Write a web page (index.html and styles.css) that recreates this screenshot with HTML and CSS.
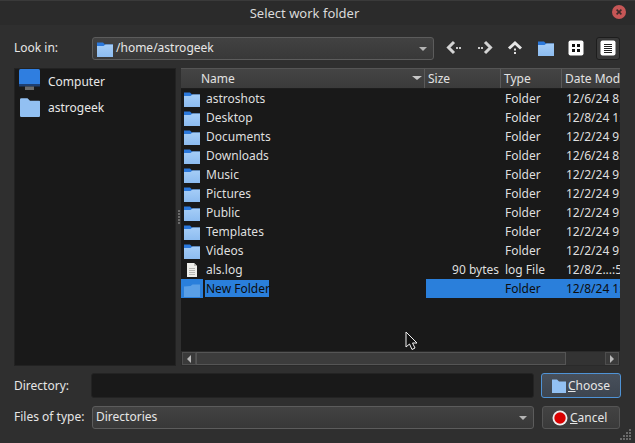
FILE: index.html
```html
<!DOCTYPE html>
<html lang="en">
<head>
<meta charset="utf-8">
<title>Select work folder</title>
<link rel="stylesheet" href="styles.css">
</head>
<body>
<svg class="defs" width="0" height="0">
  <defs>
    <linearGradient id="fb" x1="0" y1="0" x2="0" y2="1"><stop offset="0" stop-color="#a5cdf7"/><stop offset="1" stop-color="#8dbcf0"/></linearGradient>
    <symbol id="folder" viewBox="0 0 16 16">
      <path d="M0 1.500h6l2 2h8v3H0z" fill="#2a78dc"/>
      <path d="M0 5l6.500 0 2-1.600H16V16H0z" fill="url(#fb)"/>
    </symbol>
    <symbol id="folder-sel" viewBox="0 0 16 16">
      <path d="M0 5.500l6.500-.5 2-1.600H16V16H0z" fill="#5a9fe6"/>
    </symbol>
  </defs>
</svg>
<div class="window">
  <header class="titlebar">
    <span class="title">Select work folder</span>
    <span class="close"><svg width="14" height="14" viewBox="0 0 14 14"><circle cx="7" cy="7" r="7" fill="#c65656"/><path d="M4.600 4.600l4.800 4.800M9.400 4.600l-4.800 4.800" stroke="#3b2a2a" stroke-width="1.600"/></svg></span>
  </header>
  <main class="content">
    <div class="toolbar">
      <label class="label lookin">Look in:</label>
      <div class="combo path">
        <svg class="combo-icon" width="16" height="16"><use href="#folder"/></svg>
        <span class="combo-text">/home/astrogeek</span>
        <span class="arrow"></span>
      </div>
      <div class="tools">
        <button class="tool" type="button"><svg width="16" height="16" viewBox="0 0 16 16"><path d="M8 2L2.500 7.500 8 13" fill="none" stroke="#d4d4d4" stroke-width="3"/><path d="M10 7h2v2h-2zM13 7h2v2h-2z" fill="#c8c8c8"/></svg></button>
        <button class="tool" type="button"><svg width="16" height="16" viewBox="0 0 16 16"><path d="M8 2l5.500 5.500L8 13" fill="none" stroke="#d4d4d4" stroke-width="3"/><path d="M1 7h2v2H1zM4 7h2v2H4z" fill="#c8c8c8"/></svg></button>
        <button class="tool" type="button"><svg width="16" height="16" viewBox="0 0 16 16"><path d="M2 8.500L8 3l6 5.500" fill="none" stroke="#e6e6e6" stroke-width="3"/><path d="M7 8.500h2v2H7zM7 12h2v2H7z" fill="#e0e0e0"/></svg></button>
        <button class="tool" type="button"><svg width="16" height="16"><use href="#folder"/></svg></button>
        <button class="tool" type="button"><svg width="16" height="16" viewBox="0 0 16 16"><rect x=".5" y=".5" width="15" height="15" rx="2" fill="#fff"/><path d="M4 4h3v3H4zM9 4h3v3H9zM4 9h3v3H4zM9 9h3v3H9z" fill="#111"/></svg></button>
        <button class="tool active" type="button"><svg width="16" height="16" viewBox="0 0 16 16"><rect x=".5" y=".5" width="15" height="15" rx="2" fill="#fff"/><path d="M4 4h8v1H4zM4 6h8v1H4zM4 8h8v1H4zM4 10h8v1H4zM4 12h8v1H4z" fill="#222"/></svg></button>
      </div>
    </div>
    <div class="panes">
      <aside class="sidebar">
        <div class="place">
          <svg width="22" height="24" viewBox="0 0 22 24"><rect x="0" y="0" width="21" height="17" rx="1.500" fill="#2f7ee0"/><rect y="15" width="21" height="2.500" fill="#1f3f70"/><rect x="6" y="17.500" width="9" height="3.500" fill="#6b6b6b"/></svg>
          <span>Computer</span>
        </div>
        <div class="place">
          <svg width="20" height="20" viewBox="0 0 16 16"><path d="M1 1h5l2 2h7.500a.5.5 0 0 1 .5.500V15a1 1 0 0 1-1 1H1a1 1 0 0 1-1-1V2a1 1 0 0 1 1-1z" fill="#92c0f2"/></svg>
          <span>astrogeek</span>
        </div>
      </aside>
      <div class="splitter"><i></i><i></i><i></i><i></i><i></i></div>
      <section class="files">
        <div class="table-wrap">
          <div class="thead">
            <div class="th name">Name<span class="sort"></span></div>
            <div class="th size">Size</div>
            <div class="th type">Type</div>
            <div class="th date">Date Modified</div>
          </div>
          <div class="row"><div class="td name"><svg width="16" height="16"><use href="#folder"/></svg><span>astroshots</span></div><div class="td size"></div><div class="td type">Folder</div><div class="td date">12/6/24 8:14 PM</div></div>
          <div class="row"><div class="td name"><svg width="16" height="16"><use href="#folder"/></svg><span>Desktop</span></div><div class="td size"></div><div class="td type">Folder</div><div class="td date">12/8/24 1:20 PM</div></div>
          <div class="row"><div class="td name"><svg width="16" height="16"><use href="#folder"/></svg><span>Documents</span></div><div class="td size"></div><div class="td type">Folder</div><div class="td date">12/2/24 9:02 PM</div></div>
          <div class="row"><div class="td name"><svg width="16" height="16"><use href="#folder"/></svg><span>Downloads</span></div><div class="td size"></div><div class="td type">Folder</div><div class="td date">12/6/24 8:02 PM</div></div>
          <div class="row"><div class="td name"><svg width="16" height="16"><use href="#folder"/></svg><span>Music</span></div><div class="td size"></div><div class="td type">Folder</div><div class="td date">12/2/24 9:02 PM</div></div>
          <div class="row"><div class="td name"><svg width="16" height="16"><use href="#folder"/></svg><span>Pictures</span></div><div class="td size"></div><div class="td type">Folder</div><div class="td date">12/2/24 9:02 PM</div></div>
          <div class="row"><div class="td name"><svg width="16" height="16"><use href="#folder"/></svg><span>Public</span></div><div class="td size"></div><div class="td type">Folder</div><div class="td date">12/2/24 9:02 PM</div></div>
          <div class="row"><div class="td name"><svg width="16" height="16"><use href="#folder"/></svg><span>Templates</span></div><div class="td size"></div><div class="td type">Folder</div><div class="td date">12/2/24 9:02 PM</div></div>
          <div class="row"><div class="td name"><svg width="16" height="16"><use href="#folder"/></svg><span>Videos</span></div><div class="td size"></div><div class="td type">Folder</div><div class="td date">12/2/24 9:02 PM</div></div>
          <div class="row"><div class="td name"><svg width="16" height="16" viewBox="0 0 16 16"><path d="M3 1h7l3 3v11H3z" fill="#eeeeea"/><path d="M10 1l3 3h-3z" fill="#bdbdb8"/><path d="M5 6h6v1H5zM5 8h6v1H5zM5 10h6v1H5zM5 12h6v1H5z" fill="#b8b8b4"/></svg><span>als.log</span></div><div class="td size">90 bytes</div><div class="td type">log File</div><div class="td date">12/8/2...:50 PM</div></div>
          <div class="row selected"><div class="td name"><span class="sel-icon"><svg width="16" height="16"><use href="#folder-sel"/></svg></span><span class="sel-text">New Folder</span></div><div class="td size"></div><div class="td type">Folder</div><div class="td date">12/8/24 1:20 PM</div></div>
        </div>
        <div class="hscroll">
          <span class="sbtn"><span class="tri-l"></span></span>
          <span class="track"><span class="thumb"></span></span>
          <span class="sbtn"><span class="tri-r"></span></span>
        </div>
      </section>
    </div>
    <div class="form">
      <label class="label dir-label">Directory:</label>
      <div class="input"></div>
      <button class="btn primary" type="button"><svg width="16" height="16" viewBox="0 0 16 16"><path d="M1 1.500h5l2 2h7V15H1z" fill="#92c0f2"/></svg><span><u>C</u>hoose</span></button>
      <label class="label">Files of type:</label>
      <div class="combo type-combo"><span class="combo-text">Directories</span><span class="arrow"></span></div>
      <button class="btn cancel" type="button"><svg width="16" height="16" viewBox="0 0 16 16"><circle cx="8" cy="8" r="7.500" fill="#eee"/><circle cx="8" cy="8" r="5.700" fill="#d90000"/></svg><span><u>C</u>ancel</span></button>
    </div>
  </main>
  <svg class="grip" width="12" height="12" viewBox="0 0 12 12"><path d="M9 0h2v2H9zM6 3h2v2H6zM9 3h2v2H9zM3 6h2v2H3zM6 6h2v2H6zM9 6h2v2H9zM0 9h2v2H0zM3 9h2v2H3zM6 9h2v2H6zM9 9h2v2H9z" fill="#6a6a6a"/></svg>
  <svg class="cursor" width="14" height="20" viewBox="0 0 14 20"><path d="M1 1v15l3.500-3 2.500 5.500 3-1.500-2.500-5h4.500z" fill="#111" stroke="#f2f2f2" stroke-width="1"/></svg>
</div>
</body>
</html>
```

FILE: styles.css
```css
* { box-sizing: border-box; }
html, body { margin: 0; padding: 0; }
body { width: 635px; height: 443px; overflow: hidden; background: #2f2f2f; font-family: "Noto Sans", sans-serif; font-size: 12px; color: #e6e6e6; }
.defs { position: absolute; }
.window { position: relative; width: 635px; height: 443px; background: #2f2f2f; display: flex; flex-direction: column; border-top: 1px solid #3a3a3a; }
.titlebar { height: 24px; flex: none; position: relative; display: flex; align-items: center; justify-content: center; padding-right: 26px; background: #2b2b2b; }
.title { font-size: 13px; color: #dadada; }
.close { position: absolute; right: 9px; top: 4px; width: 14px; height: 14px; display: flex; }
.content { flex: 1; padding: 12px 15px 0 14px; display: flex; flex-direction: column; }
.toolbar { display: flex; align-items: center; height: 23px; }
.label { display: block; color: #e6e6e6; }
.lookin { width: 78px; flex: none; padding-bottom: 2px; }
.combo { display: flex; align-items: center; height: 23px; border: 1px solid #5c5c5c; border-radius: 3px; background: linear-gradient(#424242, #383838); color: #e6e6e6; }
.path { width: 342px; flex: none; padding-left: 4px; }
.combo-icon { margin-right: 3px; flex: none; }
.combo-text { flex: 1; padding-bottom: 2px; }
.arrow { width: 0; height: 0; border-left: 4px solid transparent; border-right: 4px solid transparent; border-top: 4px solid #b4b4b4; margin-right: 6px; }
.tools { display: flex; margin-left: 8px; gap: 6.500px; }
.tool { width: 24px; height: 23px; padding: 0 0 1px; border: 1px solid transparent; border-radius: 3px; background: transparent; display: flex; align-items: center; justify-content: center; }
.tool.active { background: #3a3a3a; border-color: #1d1d1d; margin-left: 1px; }
.panes { display: flex; height: 298px; margin-top: 8px; }
.sidebar { width: 162px; flex: none; background: #191919; padding: 0 0 0 4px; border: 1px solid #222; }
.place { height: 26px; display: flex; align-items: center; gap: 7px; padding-bottom: 2px; color: #e8e8e8; }
.place svg { width: 22px; flex: none; }
.splitter { width: 5px; flex: none; display: flex; flex-direction: column; align-items: center; justify-content: center; gap: 1px; }
.splitter i { display: block; width: 2px; height: 2px; background: #6a6a6a; }
.files { flex: 1; display: flex; flex-direction: column; min-width: 0; background: #191919; }
.table-wrap { flex: 1; overflow: hidden; }
.thead { display: flex; height: 21px; background: linear-gradient(#444, #3b3b3b); border-top: 1px solid #555; border-bottom: 1px solid #1d1d1d; }
.th { color: #e2e2e2; display: flex; align-items: center; padding-left: 3px; border-right: 1px solid #5a5a5a; position: relative; line-height: 1; }
.th.name { padding-left: 20px; }
.th.date { border-right: 0; }
.name { width: 244px; flex: none; }
.size { width: 76px; flex: none; }
.type { width: 61px; flex: none; }
.date { width: 60px; flex: none; white-space: nowrap; overflow: hidden; }
.sort { position: absolute; right: 2px; top: 7px; width: 0; height: 0; border-left: 5px solid transparent; border-right: 5px solid transparent; border-top: 4px solid #c8c8c8; }
.row { display: flex; height: 19px; align-items: center; color: #dfdfdf; }
.td.name { display: flex; align-items: center; gap: 6px; padding-left: 3px; white-space: nowrap; }
.td.name svg { flex: none; }
.td.size { text-align: right; padding-right: 2px; }
.td.type { padding-left: 4px; }
.td.date { padding-left: 4px; }
.row.selected .td.name { padding-left: 0; gap: 2px; height: 19px; }
.sel-icon { width: 22px; height: 19px; background: #2a7fdb; display: flex; align-items: center; justify-content: center; }
.sel-text { background: #2a7fdb; color: #0d0d0d; padding: 0 0 0 1px; height: 17px; line-height: 17px; width: 64px; }
.row.selected .td.size, .row.selected .td.type, .row.selected .td.date { background: #2a7fdb; color: #0d0d0d; height: 19px; line-height: 19px; }
.row.selected .td.size { margin-left: 1px; width: 75px; }
.hscroll { height: 15px; flex: none; display: flex; background: #333; border: 1px solid #2a2a2a; }
.sbtn { width: 14px; flex: none; border: 1px solid #4e4e4e; background: #3a3a3a; display: flex; align-items: center; justify-content: center; }
.tri-l, .tri-r { width: 0; height: 0; border-top: 4px solid transparent; border-bottom: 4px solid transparent; }
.tri-l { border-right: 4px solid #b8b8b8; }
.tri-r { border-left: 4px solid #b8b8b8; }
.track { flex: 1; display: flex; padding-right: 39px; }
.thumb { flex: 1; border: 1px solid #555; background: #3c3c3c; }
.form { display: grid; grid-template-columns: 77px 443px 80px; column-gap: 0; row-gap: 8px; margin-top: 7px; align-items: start; }
.form .label { line-height: 22px; }
.form .dir-label { line-height: 25px; }
.input { height: 25px; background: #191919; border: 1px solid #232323; border-radius: 3px; }
.type-combo { width: 442px; height: 23px; margin-left: 1px; padding-left: 3px; }
.btn { height: 25px; width: 80px; margin-left: 7px; padding: 0 0 0 9px; border: 1px solid #555; border-radius: 3px; background: linear-gradient(#434343, #3a3a3a); color: #e6e6e6; font: inherit; display: flex; align-items: center; justify-content: flex-start; gap: 1px; }
.btn span { padding-bottom: 1px; }
.btn.primary { background: linear-gradient(#48505b, #3d4550); border-color: #4f93d6; }
.btn.cancel { width: 78px; height: 23px; margin-left: 8px; gap: 2px; }
.grip { position: absolute; right: 3px; bottom: 2px; }
.cursor { position: absolute; left: 405px; top: 330px; }
```
